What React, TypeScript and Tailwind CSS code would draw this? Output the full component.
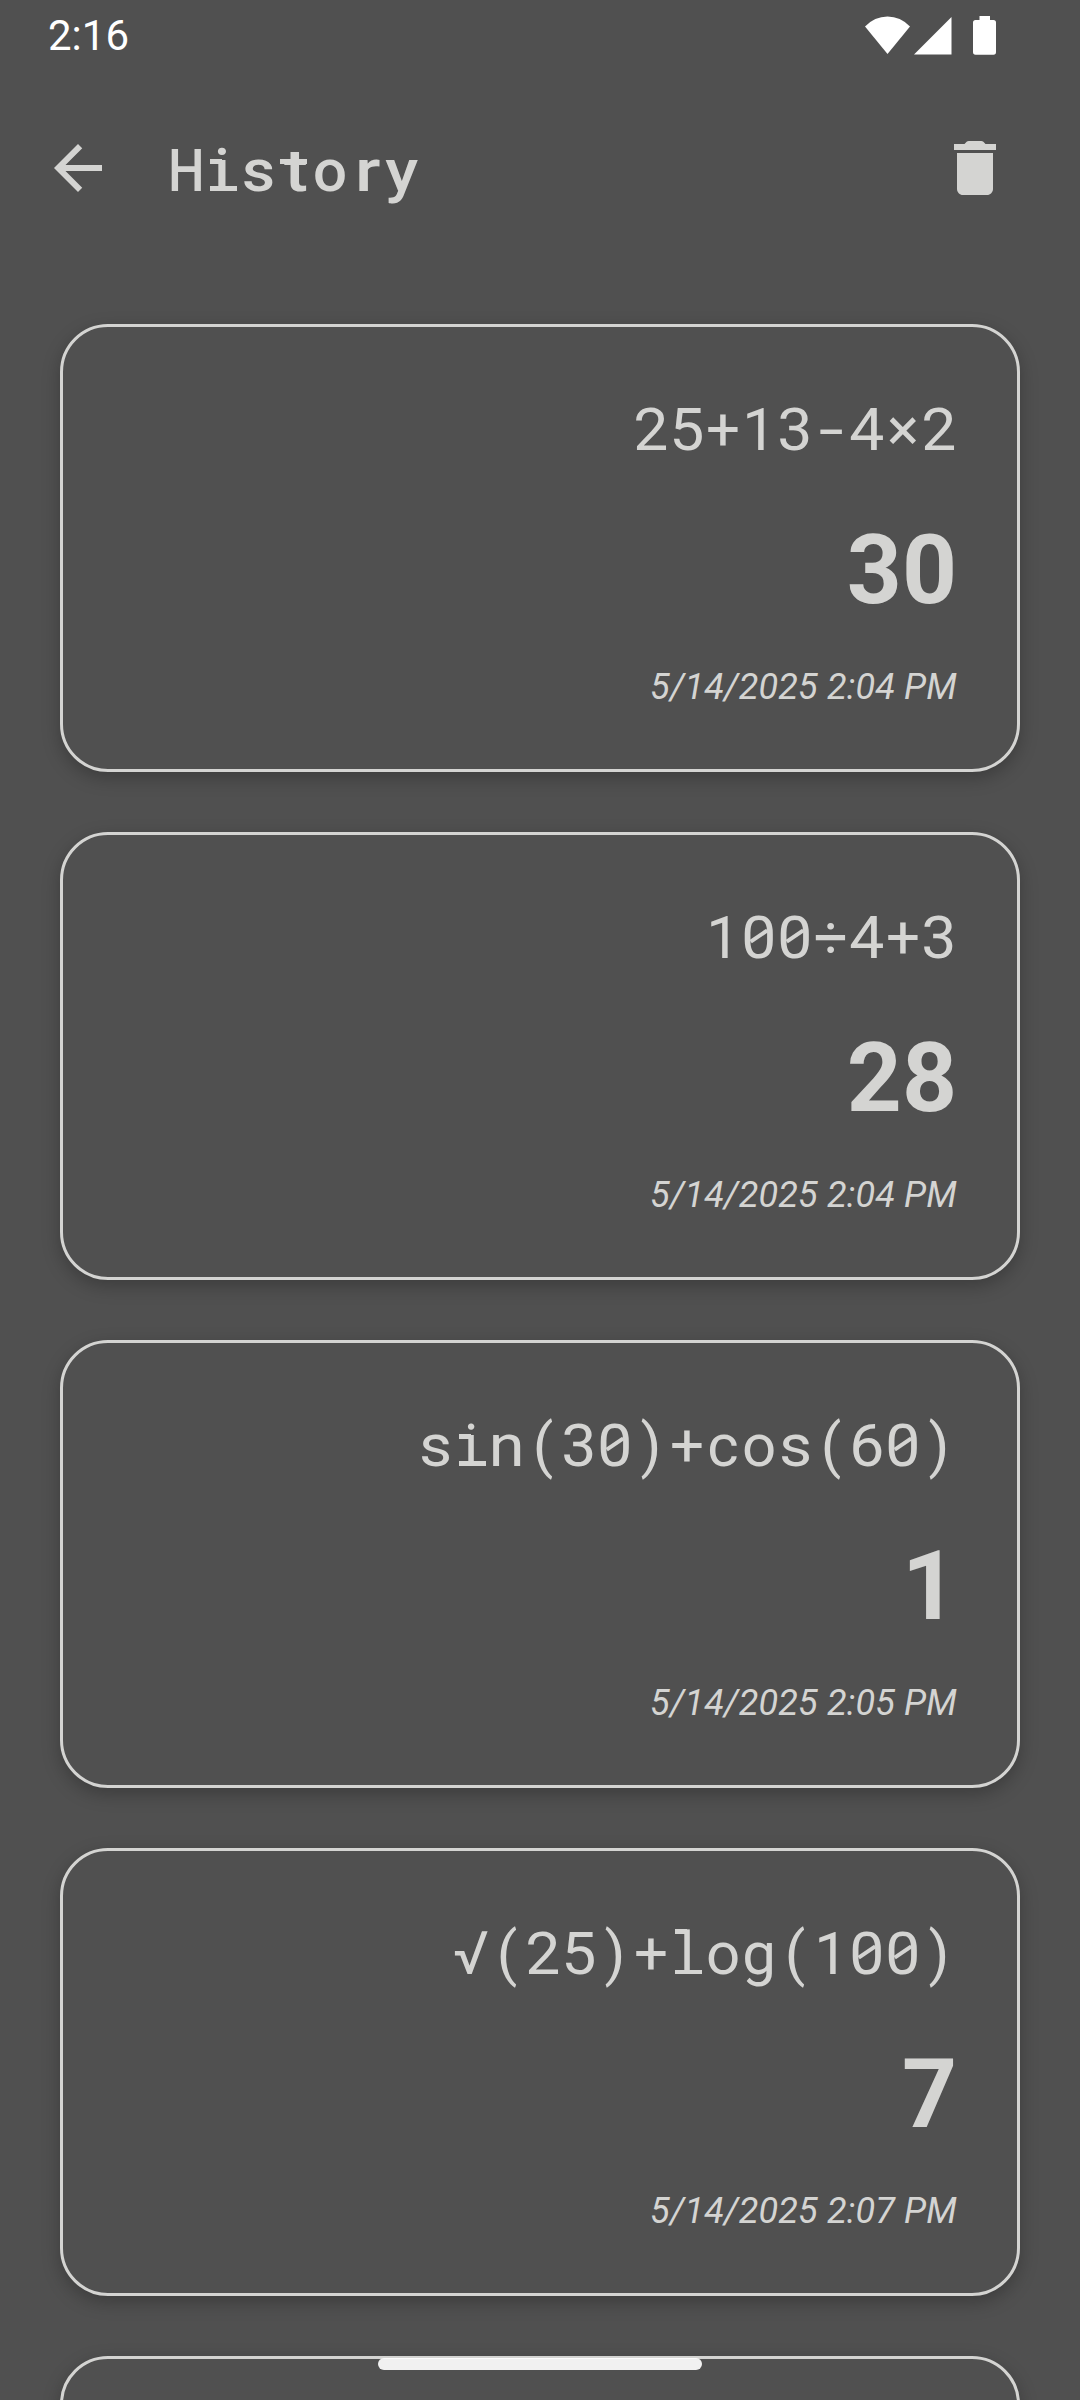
import React from 'react';

/* Small bars that turn a proportional glyph into its slab monospaced form. */
const slabs: Record<string, React.ReactNode> = {
  '0': (
    <span className="absolute left-[8px] top-[36px] h-[4px] w-[20px] -rotate-[34deg] bg-current" />
  ),
  i: (
    <>
      <span className="absolute left-[6px] top-[28px] h-[0.085em] w-[12px] bg-current" />
      <span className="absolute bottom-[20px] left-[6px] h-[0.085em] w-[27px] bg-current" />
    </>
  ),
  l: (
    <>
      <span className="absolute left-[6px] top-[15px] h-[0.075em] w-[12px] bg-current" />
      <span className="absolute bottom-[20px] left-[6px] h-[0.075em] w-[27px] bg-current" />
    </>
  ),
  t: <span className="absolute left-[4px] top-[28px] h-[0.09em] w-[27px] bg-current" />,
};

/* Width corrections for glyphs whose proportional shape does not fill the cell. */
const widths: Record<string, string> = {
  '-': 'scale-x-[1.5]',
  H: 'scale-x-[0.86]',
  s: 'scale-x-[1.07]',
  n: 'scale-x-[1.08]',
  t: 'scale-x-[1.2] translate-x-[2px]',
  r: 'scale-x-[1.2] translate-x-[2px]',
  y: 'scale-x-[1.12]',
  '2': 'scale-x-[1.04]',
  '3': 'scale-x-[1.04]',
  '4': 'scale-x-[1.04]',
  '5': 'scale-x-[1.04]',
  '6': 'scale-x-[1.04]',
  '0': 'scale-x-[1.04]',
};

function Mono({ text }: { text: string }) {
  return (
    <span className="flex">
      {Array.from(text).map((ch, i) => (
        <span key={i} className="relative flex w-[36px] justify-center">
          <span className={widths[ch]}>{ch}</span>
          {slabs[ch]}
        </span>
      ))}
    </span>
  );
}

const entries = [
  { expression: '25+13-4×2', result: '30', date: '5/14/2025 2:04 PM' },
  { expression: '100÷4+3', result: '28', date: '5/14/2025 2:04 PM' },
  { expression: 'sin(30)+cos(60)', result: '1', date: '5/14/2025 2:05 PM' },
  { expression: '√(25)+log(100)', result: '7', date: '5/14/2025 2:07 PM' },
];

const card =
  'h-[448px] shrink-0 rounded-[48px] border-[3px] border-[#d4d4d2] bg-[#505050] shadow-[0_6px_18px_rgba(0,0,0,0.25)]';

function Card({ expression, result, date }: (typeof entries)[number]) {
  return (
    <article className={`${card} flex flex-col items-end pr-[60px] pt-[63px]`}>
      <div className="text-[60px] leading-[80px]">
        <Mono text={expression} />
      </div>
      <div className="mt-[44px] text-[96px] font-bold leading-[112px]">{result}</div>
      <div className="mt-[40px] text-[36px] italic leading-[42px] tracking-[0.18px]">{date}</div>
    </article>
  );
}

export default function App() {
  return (
    <div className="relative flex h-[2400px] w-[1080px] flex-col overflow-hidden bg-[#505050] font-['Roboto',sans-serif] text-[#d4d4d2]">
      <div className="flex h-[72px] shrink-0 items-center pl-[48px] text-white">
        <span className="text-[42px] leading-[72px]">2:16</span>
        <svg className="ml-auto h-[72px] w-[216px]" viewBox="864 0 216 72" fill="currentColor">
          <path d="M887.5 54 865 26.5Q874.500 16.500 887.500 16.500T910 26.500Z" />
          <path d="M914 54.500H951.500V17Z" />
          <path d="M979.500 16H990V20H993.500Q996 20 996 22.500V52Q996 54.700 993.500 54.700H975.500Q973 54.700 973 52V22.500Q973 20 975.500 20H979.500Z" />
        </svg>
      </div>

      <header className="flex h-[192px] shrink-0 items-start pl-[42px] pr-[69px] pt-[60px]">
        <svg className="size-[72px]" viewBox="0 0 24 24" fill="currentColor">
          <path d="M20 11H7.830l5.590-5.590L12 4l-8 8 8 8 1.410-1.410L7.830 13H20v-2z" />
        </svg>
        <h1 className="ml-[54px] -mt-px text-[60px] font-medium leading-[80px]">
          <Mono text="History" />
        </h1>
        <svg className="ml-auto size-[72px]" viewBox="0 0 24 24" fill="currentColor">
          <path d="M6 19c0 1.100.9 2 2 2h8c1.100 0 2-.9 2-2V7H6v12zM19 4h-3.500l-.71-.71c-.18-.18-.44-.29-.7-.29H9.910c-.26 0-.52.11-.7.29L8.500 4H5v2h14V4z" />
        </svg>
      </header>

      <main className="flex flex-col gap-[60px] px-[60px] pt-[60px]">
        {entries.map((e) => (
          <Card key={e.expression} {...e} />
        ))}
        <article className={card} />
      </main>

      <div className="absolute bottom-[30px] left-[378px] h-[12px] w-[324px] rounded-full bg-white/92" />
    </div>
  );
}
